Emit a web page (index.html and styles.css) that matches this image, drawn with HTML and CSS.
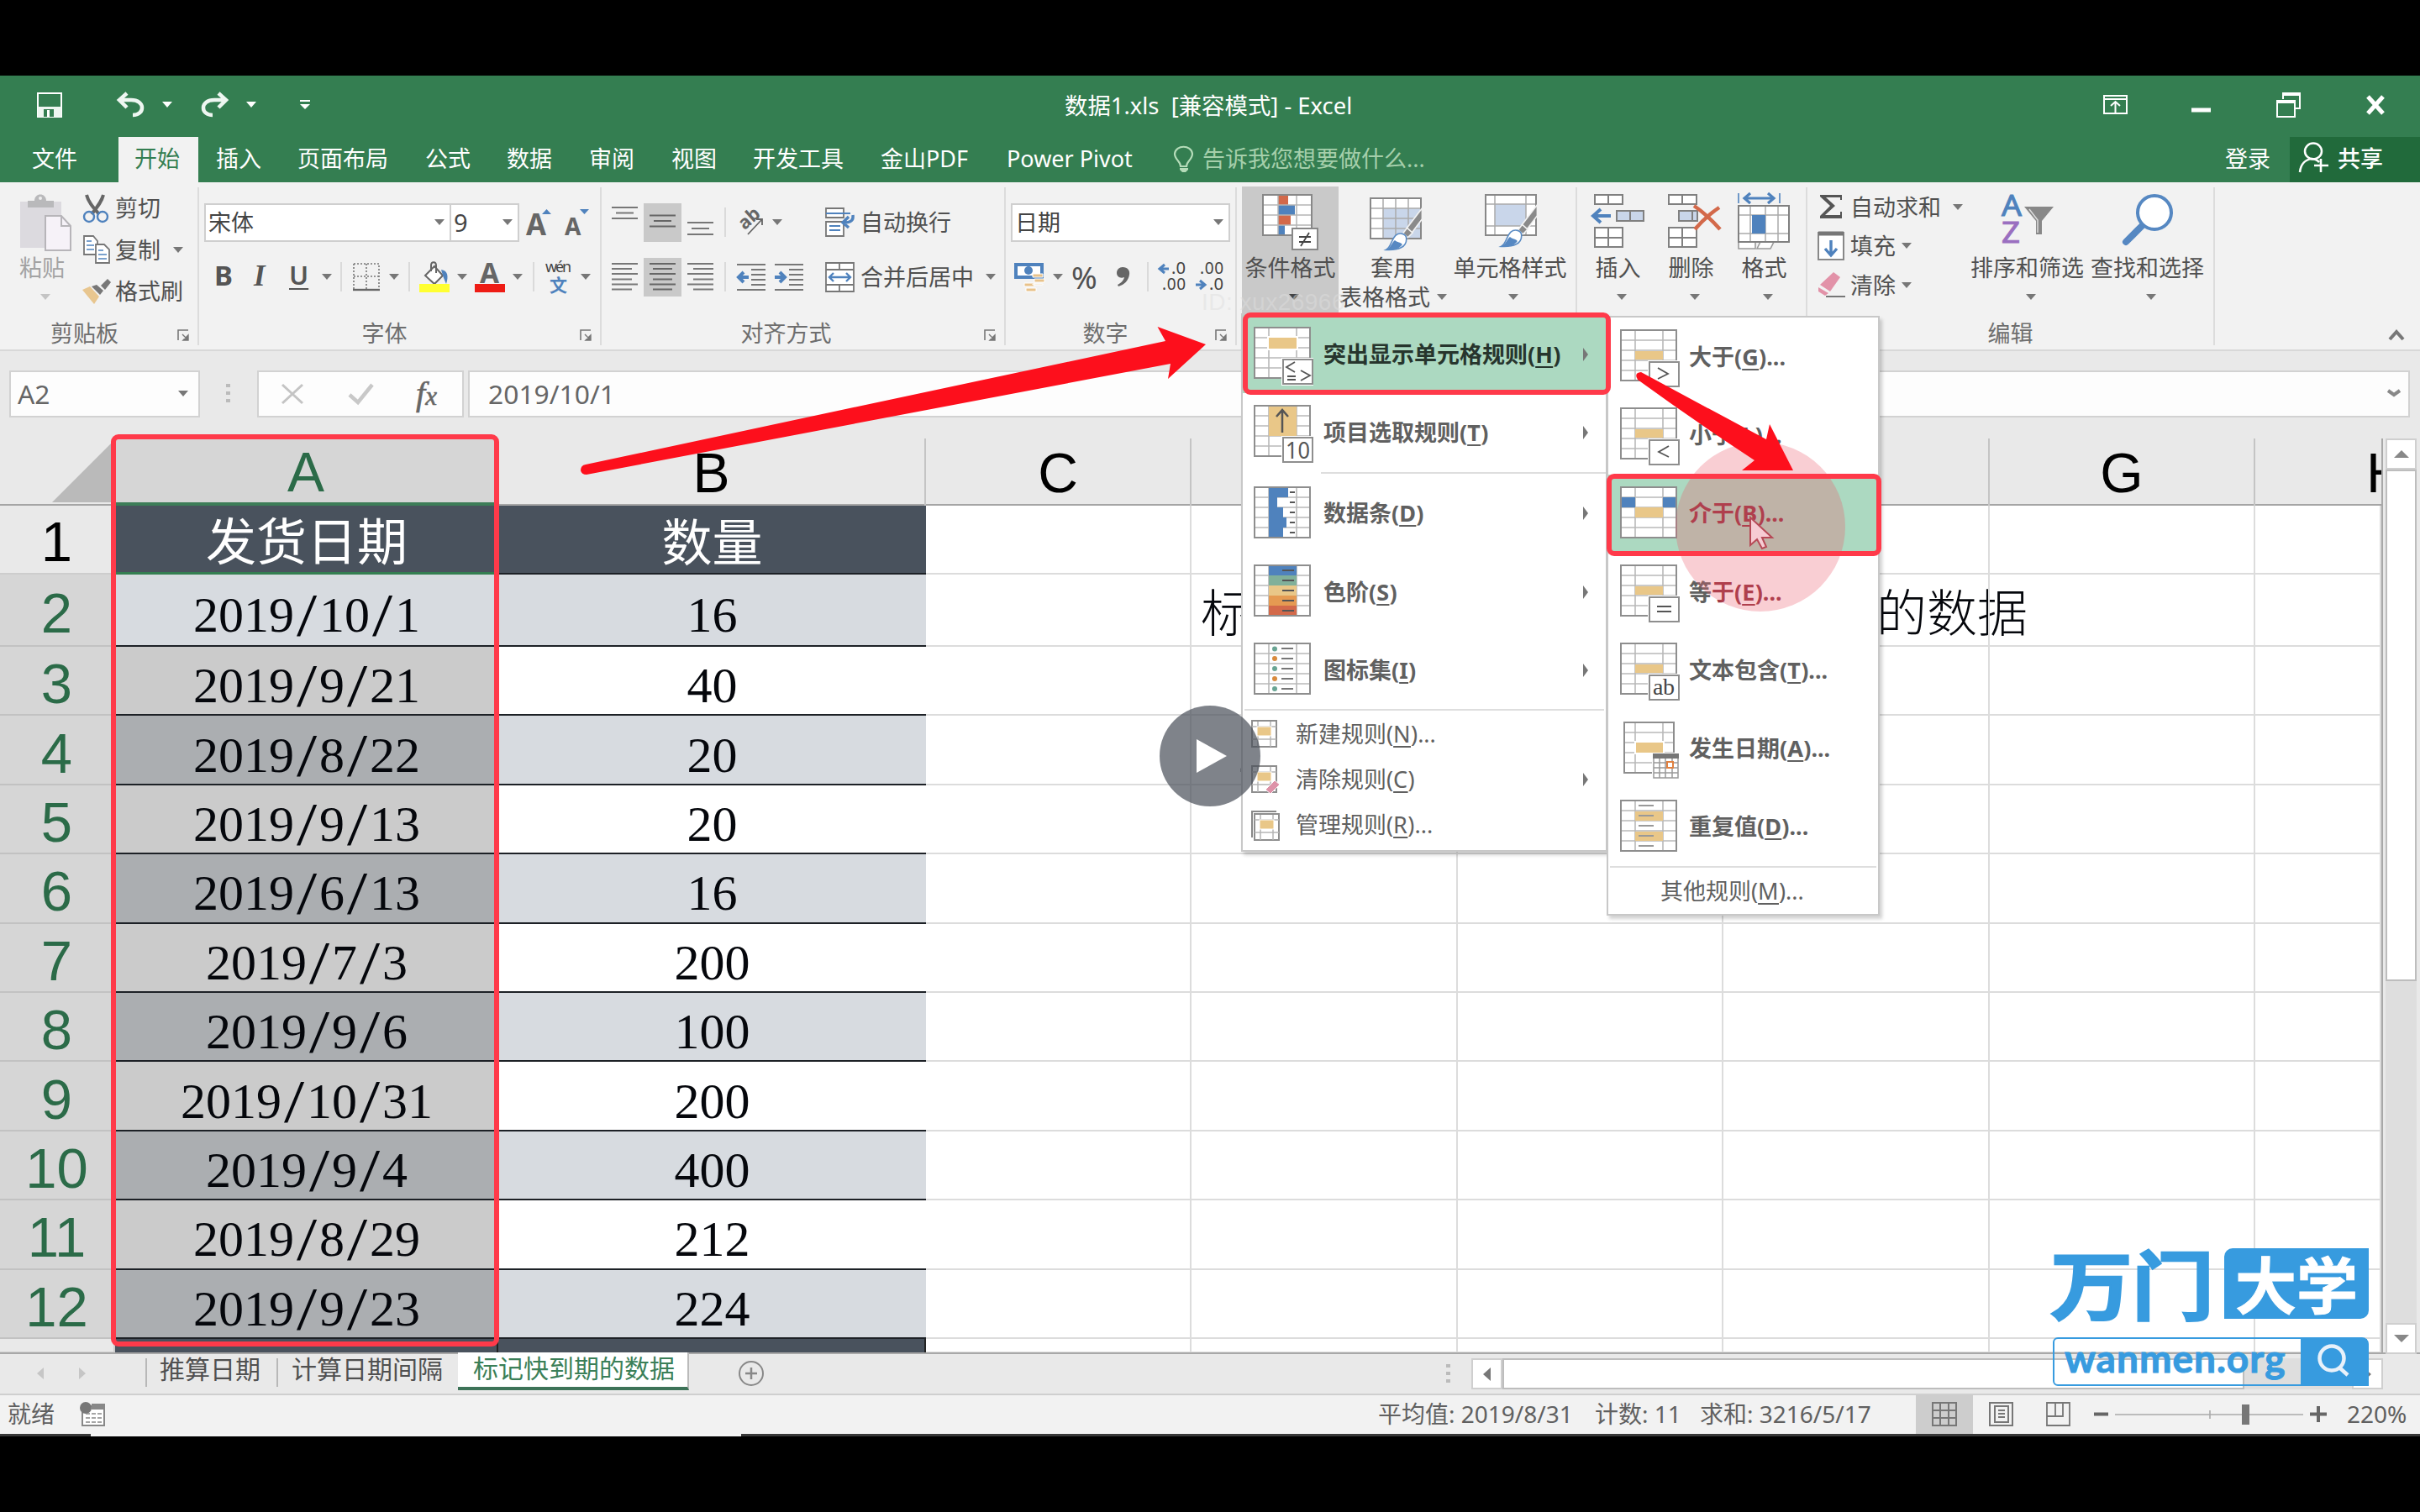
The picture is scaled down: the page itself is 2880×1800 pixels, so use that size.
FILE: index.html
```html
<!DOCTYPE html>
<html lang="zh-CN">
<head>
<meta charset="utf-8">
<title>数据1.xls [兼容模式] - Excel</title>
<link rel="stylesheet" href="styles.css">
</head>
<body>
<svg width="0" height="0" class="defs">
  <defs>
    <symbol id="grid" viewBox="0 0 70 70" overflow="visible">
      <rect x="1" y="1" width="66" height="60" fill="#fff"/>
      <path d="M1 13H67M1 25H67M1 37H67M1 49H67M18 1V61M51 1V61" stroke="#b9b9b9" stroke-width="1.6" fill="none"/>
      <rect x="1" y="1" width="66" height="60" fill="none" stroke="#8e8e8e" stroke-width="2"/>
    </symbol>
    <symbol id="badge" viewBox="0 0 40 34" overflow="visible">
      <rect x="-1" y="-1" width="38" height="33" fill="#fff"/>
      <rect x="1" y="1" width="35" height="29" fill="#fff" stroke="#8e8e8e" stroke-width="2"/>
    </symbol>
    <symbol id="mini" viewBox="0 0 32 34" overflow="visible">
      <rect x="1" y="1" width="29" height="31" fill="#fff" stroke="#8e8e8e" stroke-width="2"/>
      <path d="M8 2V32M23 2V32M1 8H30M1 23H30" stroke="#b5b5b5" stroke-width="1.5"/>
      <rect x="7" y="8" width="17" height="11" fill="#e9c788" stroke="#fff"/>
    </symbol>
    <symbol id="launch" viewBox="0 0 15 15" overflow="visible">
      <path d="M1 13V1H13" fill="none" stroke="#777" stroke-width="1.6"/>
      <path d="M6 6L12 12M13 7V13H7Z" fill="#777" stroke="#777" stroke-width="1.4"/>
    </symbol>
    <symbol id="brush" viewBox="0 0 54 64" overflow="visible">
      <path d="M54 1V17L39 37L31 31Z" fill="#8a8a8a" stroke="#f2f2f2" stroke-width="2"/>
      <path d="M32 30L40 37L33 44L26 38Z" fill="#8a8a8a" stroke="#f2f2f2" stroke-width="2"/>
      <path d="M1 62C9 58 8 48 15 41C21 36 31 38 31 46C31 58 20 63 1 62Z" fill="#fff" stroke="#5b8cc4" stroke-width="2"/>
      <path d="M1 62C9 58 9 52 14 48C19 52 21 50 25 54C20 61 12 63 1 62Z" fill="#5688c2"/>
    </symbol>
  </defs>
</svg>

<div class="screen">
  <header class="titlebar">
    <div class="quick">
      <svg width="30" height="30" viewBox="0 0 30 30"><path d="M1 1H29V29H1Z" fill="none" stroke="#fff" stroke-width="2"/><path d="M1 17H29V29H1Z" fill="#eef6f1"/><path d="M8 29V20H20V29Z" fill="#347e51"/><path d="M12 21H15V29H12Z" fill="#fff"/></svg>
      <svg class="q-undo" width="34" height="30" viewBox="0 0 34 30"><path d="M12 1L3 9L12 18M4 9H17C34 9 34 27 19 27" fill="none" stroke="#eef6f1" stroke-width="4.5"/></svg>
      <i class="dd light"></i>
      <svg class="q-redo" width="34" height="30" viewBox="0 0 34 30"><path d="M22 1L31 9L22 18M30 9H17C0 9 0 27 15 27" fill="none" stroke="#eef6f1" stroke-width="4.5"/></svg>
      <i class="dd light"></i>
      <svg class="q-more" width="12" height="12" viewBox="0 0 12 12"><path d="M0 1H12" stroke="#fff" stroke-width="2"/><path d="M0 5H12L6 11Z" fill="#fff"/></svg>
    </div>
    <div class="doc">数据1.xls&nbsp; [兼容模式] - Excel</div>
    <div class="winctl">
      <svg class="w104" width="30" height="24" viewBox="0 0 30 24"><path d="M1 1H28V22H1ZM1 5H28M14.5 21V9M9 13L14.5 8L20 13" fill="none" stroke="#fff" stroke-width="2"/></svg>
      <svg class="w100" width="24" height="24" viewBox="0 0 24 24"><path d="M0 18H23" stroke="#fff" stroke-width="5"/></svg>
      <svg class="w107" width="30" height="30" viewBox="0 0 30 30"><path d="M8 8V1H28V19H22M1 10H22V29H1Z" fill="none" stroke="#fff" stroke-width="2"/><path d="M8 2H28M1 11H22" stroke="#fff" stroke-width="4"/></svg>
      <svg width="23" height="22" viewBox="0 0 23 22"><path d="M2 1L20 21M20 1L2 21" stroke="#fff" stroke-width="5"/></svg>
    </div>
  </header>

  <nav class="tabs">
    <span class="tab w141 file">文件</span><span class="tab w95 on">开始</span><span class="tab w97">插入</span><span class="tab w152">页面布局</span><span class="tab w97">公式</span><span class="tab w98">数据</span><span class="tab w98">审阅</span><span class="tab w97">视图</span><span class="tab w152">开发工具</span><span class="tab w150">金山PDF</span><span class="tab w194">Power Pivot</span>
    <svg class="bulb" width="24" height="32" viewBox="0 0 24 32"><path d="M8 24C8 18 1 16 1 9C2 -2 21 -2 22 9C22 16 15 18 15 24Z" fill="none" stroke="#b5dcb9" stroke-width="2.2"/><path d="M7 26H17V28L14 31H10L7 28Z" fill="#b5dcb9"/></svg>
    <span class="tell">告诉我您想要做什么...</span>
    <span class="login">登录</span>
    <span class="share"><svg width="36" height="38" viewBox="0 0 36 38"><ellipse cx="17" cy="11" rx="10" ry="9.5" fill="none" stroke="#fff" stroke-width="2.5"/><path d="M1 36C2 26 8 21 15 20C19 20 22 22 24 24M26 20V36M18 28H35" fill="none" stroke="#fff" stroke-width="2.6"/></svg>共享</span>
  </nav>

  <section class="ribbon">
    <div class="group g-clip">
      <div class="body">
        <div class="big dim w98">
          <div class="pic"><svg width="62" height="68" viewBox="0 0 62 68"><path d="M1 9H50V64H1Z" fill="#dcdadf"/><path d="M10 8H18C18 -2 32 -2 32 8H41V16H10Z" fill="#b9b9bb"/><circle cx="25" cy="5" r="2" fill="#eee"/><path d="M31 26H50L61 38V67H31Z" fill="#f6f2f8" stroke="#b7b5b9" stroke-width="2"/><path d="M50 26V38H61" fill="none" stroke="#b7b5b9" stroke-width="2"/></svg></div>
          <div class="cap">粘贴</div><div class="sub"><i class="dd pale"></i></div>
        </div>
        <div class="stack">
          <div class="line"><svg class="w40" width="32" height="34" viewBox="0 0 32 34"><path d="M5 1C7 9 12 15 20 24M25 1C23 9 18 15 11 24" stroke="#666" stroke-width="4" fill="none"/><circle cx="8" cy="27" r="6" fill="none" stroke="#4f82bd" stroke-width="2.4"/><circle cx="24" cy="27" r="6" fill="none" stroke="#4f82bd" stroke-width="2.4"/></svg>剪切</div>
          <div class="line"><svg class="w40" width="34" height="34" viewBox="0 0 34 34"><path d="M2 1H13L18 7V23H2Z" fill="#fff" stroke="#777" stroke-width="1.8"/><path d="M5 7H11M5 12H14M5 17H14" stroke="#4f82bd" stroke-width="1.6"/><path d="M16 11H26L32 17V33H16Z" fill="#fff" stroke="#777" stroke-width="1.8"/><path d="M19 18H25M19 23H29M19 28H29" stroke="#4f82bd" stroke-width="1.6"/></svg><span class="w69">复制</span><i class="dd"></i></div>
          <div class="line"><svg class="w40" width="34" height="32" viewBox="0 0 34 32"><path d="M0 14L9 10L20 22L14 31Z" fill="#e8c68f"/><path d="M11 10L17 8L25 15L21 20Z" fill="#777"/><path d="M22 9L30 1L34 5L27 14Z" fill="#777"/></svg>格式刷</div>
        </div>
      </div>
      <div class="foot"><span class="name n-clip">剪贴板</span><svg class="lnch" width="15" height="15"><use href="#launch"/></svg></div>
    </div>

    <div class="group g-font">
      <div class="body rows">
        <div class="row p6"><span class="select w293">宋体<i class="dd"></i></span><span class="select w81 nb">9<i class="dd"></i></span>
          <svg class="grow" width="82" height="36" viewBox="0 0 82 36"><text x="8" y="33" font-size="35" font-weight="bold" textLength="24" lengthAdjust="spacingAndGlyphs" fill="#666">A</text><path d="M27 8H38L32.500 2Z" fill="#4f82bd"/><text x="54" y="33" font-size="28" font-weight="bold" fill="#666">A</text><path d="M72 2H83L77.500 8Z" fill="#4f82bd"/></svg></div>
        <div class="row p18"><b class="w45 fb">B</b><b class="w44 fi">I</b><b class="w39 fu">U</b><i class="dd w22"></i><i class="bar w15"></i>
          <svg class="w43" width="32" height="34" viewBox="0 0 32 34"><path d="M1 1H31V31M1 1V31M16 1V31M1 16H31" fill="none" stroke="#777" stroke-width="1.6" stroke-dasharray="2 2"/><path d="M0 32H32" stroke="#666" stroke-width="2.4"/></svg><i class="dd w23"></i><i class="bar w13"></i>
          <svg class="w45" width="36" height="38" viewBox="0 0 36 38"><path d="M7 17L18 6L28 17L18 27Z" fill="#fff" stroke="#666" stroke-width="2"/><path d="M14 12V5C14 0 20 0 20 5V14" fill="none" stroke="#666" stroke-width="2"/><path d="M26 10C34 11 35 18 32 27C30 22 29 20 28 17Z" fill="#4f82bd"/><path d="M0 27H36V37H0Z" fill="#ffff32"/></svg><i class="dd w21"></i>
          <svg class="w45" width="36" height="38" viewBox="0 0 36 38"><text x="6" y="26" font-size="34" font-weight="bold" textLength="23" lengthAdjust="spacingAndGlyphs" fill="#666">A</text><path d="M0 27H36V37H0Z" fill="#ee1c15"/></svg><i class="dd w24"></i><i class="bar w15"></i>
          <svg class="w42" width="34" height="38" viewBox="0 0 34 38"><text x="0" y="13" font-size="18" textLength="31" fill="#444">wén</text><text x="5" y="36" font-size="21" fill="#4f82bd" font-weight="bold">文</text></svg><i class="dd"></i></div>
      </div>
      <div class="foot"><span class="name">字体</span><svg class="lnch" width="15" height="15"><use href="#launch"/></svg></div>
    </div>

    <div class="group g-align">
      <div class="body">
        <div class="rows w251">
          <div class="row p8"><span class="w45 al"><svg width="31" height="46" viewBox="0 0 31 46"><path d="M0 5H31M5 11.500H26M0 18H31" stroke="#777" stroke-width="2"/></svg></span><span class="w45 al hot"><svg width="31" height="46" viewBox="0 0 31 46"><path d="M0 14.500H31M5 21H26M0 27.500H31" stroke="#666" stroke-width="2"/></svg></span><span class="w45 al"><svg width="31" height="46" viewBox="0 0 31 46"><path d="M0 23H31M5 30H26M0 37H31" stroke="#777" stroke-width="2"/></svg></span>
            <i class="bar w15 ml4"></i><svg class="w42" width="34" height="32" viewBox="0 0 34 32"><text x="4" y="22" transform="rotate(-42 11 17)" font-size="22" font-weight="bold" fill="#666">ab</text><path d="M13 30L29 13M23 12H30V19" fill="none" stroke="#666" stroke-width="1.8"/></svg><i class="dd"></i></div>
          <div class="row p8"><span class="w45 al"><svg width="31" height="46" viewBox="0 0 31 46"><path d="M0 7H31M0 13H24M0 19H31M0 25.500H24M0 31.500H31M0 37.500H24" stroke="#777" stroke-width="2"/></svg></span><span class="w45 al hot"><svg width="31" height="46" viewBox="0 0 31 46"><path d="M0 7H31M4 13H27M0 19H31M4 25.500H27M0 31.500H31M4 37.500H27" stroke="#666" stroke-width="2"/></svg></span><span class="w45 al"><svg width="31" height="46" viewBox="0 0 31 46"><path d="M0 7H31M7 13H31M0 19H31M7 25.500H31M0 31.500H31M7 37.500H31" stroke="#777" stroke-width="2"/></svg></span>
            <i class="bar w15 ml4"></i><svg class="w45" width="34" height="34" viewBox="0 0 34 34"><path d="M0 2H34M17 8H34M17 14H34M17 20H34M17 26H34M0 32H34" stroke="#777" stroke-width="2"/><path d="M14 17H2M8 11L2 17L8 23" fill="none" stroke="#4f82bd" stroke-width="4"/></svg><svg width="34" height="34" viewBox="0 0 34 34"><path d="M0 2H34M17 8H34M17 14H34M17 20H34M17 26H34M0 32H34" stroke="#777" stroke-width="2"/><path d="M0 17H12M6 11L12 17L6 23" fill="none" stroke="#4f82bd" stroke-width="4"/></svg></div>
        </div>
        <div class="rows wraps">
          <div class="row"><svg class="w42" width="36" height="36" viewBox="0 0 36 36"><path d="M1 1H22V12H1ZM1 17H22V34H1Z" fill="#fff" stroke="#777" stroke-width="1.8"/><path d="M1 7H30M5 22H18M5 27H18" stroke="#4f82bd" stroke-width="1.8"/><path d="M33 9C34 15 31 18 22 18M28 11L21 18L28 24" fill="none" stroke="#4f82bd" stroke-width="3.4"/></svg>自动换行</div>
          <div class="row"><svg class="w42" width="36" height="36" viewBox="0 0 36 36"><path d="M1 1H34V35H1ZM1 9H34M1 27H34M17 1V9M17 27V35" fill="#fff" stroke="#777" stroke-width="1.8"/><path d="M5 18H30M10 13L5 18L10 23M25 13L30 18L25 23" fill="none" stroke="#4f82bd" stroke-width="2.4"/></svg><span class="w149">合并后居中</span><i class="dd"></i></div>
        </div>
      </div>
      <div class="foot"><span class="name n-align">对齐方式</span><svg class="lnch" width="15" height="15"><use href="#launch"/></svg></div>
    </div>

    <div class="group g-num">
      <div class="body rows">
        <div class="row p6"><span class="select w261">日期<i class="dd"></i></span></div>
        <div class="row p10"><svg class="w46" width="36" height="34" viewBox="0 0 36 34"><path d="M2 2H33V17H2Z" fill="#fff" stroke="#4f82bd" stroke-width="4"/><circle cx="17" cy="9" r="5" fill="#4f82bd"/><path d="M22 13h12v4h-12zM24 19h12v4h-12zM22 25h12v1h-12zM12 24h12v4h-12zM14 30h12v4h-12z" fill="#e8c28a" stroke="#fff" stroke-width="1"/></svg><i class="dd w22"></i><span class="w55 pct">%</span><span class="w36"><svg width="16" height="24" viewBox="0 0 16 24"><path d="M7 0C13 0 16 4 15 9C14 16 9 21 2 23L1 21C6 18 8 16 9 12C4 14 0 11 0 7C0 3 3 0 7 0Z" fill="#666"/></svg></span><i class="bar w13"></i>
          <svg class="w45" width="34" height="38" viewBox="0 0 34 38"><path d="M13 9H2M8 4L2 9L8 14" fill="none" stroke="#4f82bd" stroke-width="3"/><text x="16" y="15" font-size="19" fill="#444" textLength="17" lengthAdjust="spacingAndGlyphs">.0</text><text x="5" y="34" font-size="19" fill="#444" textLength="28">.00</text></svg><svg width="34" height="38" viewBox="0 0 34 38"><text x="5" y="15" font-size="19" fill="#444" textLength="28">.00</text><path d="M0 28H11M5 23L11 28L5 33" fill="none" stroke="#4f82bd" stroke-width="3"/><text x="16" y="34" font-size="19" fill="#444" textLength="17" lengthAdjust="spacingAndGlyphs">.0</text></svg></div>
      </div>
      <div class="foot"><span class="name n-num">数字</span><svg class="lnch l-num" width="15" height="15"><use href="#launch"/></svg></div>
    </div>

    <div class="group g-style">
      <div class="body p6">
        <div class="big w115 pressed"><div class="pic"><svg width="67" height="67" viewBox="0 0 67 67"><path d="M1 1H59V49H1Z" fill="#fff"/><path d="M19 1H31V13H19ZM19 25H34V37H19Z" fill="#d3694a"/><path d="M19 13H39V25H19ZM19 37H27V49H19Z" fill="#4f82bd"/><path d="M1 13H59M1 25H59M1 37H59M19 1V49M41 1V49" stroke="#b5b5b5" stroke-width="1.5"/><path d="M1 1H59V49H1Z" fill="none" stroke="#888" stroke-width="2"/><path d="M36 41H66V66H36Z" fill="#fff" stroke="#888" stroke-width="2"/><path d="M44 51H58M44 57H58M56 46L46 62" stroke="#444" stroke-width="1.8"/></svg></div><div class="cap">条件格式</div><div class="sub"><i class="dd dark r4"></i></div></div>
        <div class="big w130"><div class="pic"><svg class="r12" width="67" height="70" viewBox="0 0 67 70"><path d="M1 5H61V53H1Z" fill="#fff"/><path d="M16 17H61V53H16Z" fill="#c9d6ea"/><path d="M1 17H61M1 29H61M1 41H61M16 5V53M31 5V53M46 5V53" stroke="#aaa" stroke-width="1.5"/><path d="M1 5H61V53H1Z" fill="none" stroke="#888" stroke-width="2"/><use href="#brush" x="15" y="16" width="51" height="52"/></svg></div><div class="cap">套用</div><div class="sub">表格格式<i class="dd"></i></div></div>
        <div class="big w148"><div class="pic"><svg class="r6" width="67" height="67" viewBox="0 0 67 67"><path d="M1 1H61V49H1Z" fill="#fff"/><path d="M12 12H49V38H12Z" fill="#c9d6ea"/><path d="M1 12H61M1 38H61M12 1V49M49 1V49" stroke="#aaa" stroke-width="1.5"/><path d="M1 1H61V49H1Z" fill="none" stroke="#888" stroke-width="2"/><use href="#brush" x="15" y="12" width="51" height="52"/></svg></div><div class="cap">单元格样式</div><div class="sub"><i class="dd r4"></i></div></div>
      </div>
    </div>

    <div class="group g-cell">
      <div class="body p5">
        <div class="big w87"><div class="pic"><svg width="65" height="66" viewBox="0 0 65 66"><path d="M5 1H38V12H5ZM21 1V12M5 40H38V63H5ZM5 52H38M21 40V63" fill="#fff" stroke="#808080" stroke-width="2"/><path d="M31 20H63V32H31ZM47 20V32" fill="#c9d6ea" stroke="#808080" stroke-width="2"/><path d="M24 26H3M12 18L3 26L12 34" fill="none" stroke="#4f82bd" stroke-width="4"/></svg></div><div class="cap">插入</div><div class="sub"><i class="dd r4"></i></div></div>
        <div class="big w87"><div class="pic"><svg class="r6" width="65" height="66" viewBox="0 0 65 66"><path d="M2 1H35V12H2ZM18 1V12M2 40H35V63H2ZM2 52H35M18 40V63" fill="#fff" stroke="#808080" stroke-width="2"/><path d="M14 20H36V32H14ZM30 20V32" fill="#c9d6ea" stroke="#808080" stroke-width="2"/><path d="M32 14C44 22 54 32 63 42M62 16C50 24 40 34 33 42" fill="none" stroke="#d3694a" stroke-width="4.5"/></svg></div><div class="cap">删除</div><div class="sub"><i class="dd r4"></i></div></div>
        <div class="big w87"><div class="pic"><svg width="65" height="68" viewBox="0 0 65 68"><path d="M2 57H22V65H2ZM24 65L28 57H44L40 65Z" fill="#fff" stroke="#999" stroke-width="1.600"/><path d="M2 14H62V57H2Z" fill="#fff"/><path d="M2 25H62M2 47H62M16 14V57M34 14V57M49 14V57" stroke="#aaa" stroke-width="1.500"/><path d="M18 25H34V47H18Z" fill="#4f82bd"/><path d="M2 14H62V57H2Z" fill="none" stroke="#808080" stroke-width="2"/><path d="M2 -1V11M51 -1V11" stroke="#4f82bd" stroke-width="1.600"/><path d="M9 5H44M16 -1L9 5L16 11M37 -1L44 5L37 11" fill="none" stroke="#4f82bd" stroke-width="3.200"/></svg></div><div class="cap">格式</div><div class="sub"><i class="dd r4"></i></div></div>
      </div>
    </div>

    <div class="group g-edit">
      <div class="body p12">
        <div class="stack tight w178">
          <div class="line"><svg class="w40" width="30" height="30" viewBox="0 0 30 30"><path d="M2 1H28V7H26V4H9L20 14L8 25H26V21H28V29H2V26L14 14L2 3Z" fill="#555"/></svg><span class="w122">自动求和</span><i class="dd"></i></div>
          <div class="line"><svg class="w40" width="32" height="36" viewBox="0 0 32 36"><path d="M1 2H31V34H1Z" fill="#fff" stroke="#888" stroke-width="2"/><path d="M1 3H31" stroke="#777" stroke-width="5"/><path d="M16 11V29M9 21L16 29L23 21" fill="none" stroke="#4f82bd" stroke-width="3.400"/></svg><span class="w61">填充</span><i class="dd"></i></div>
          <div class="line"><svg class="w40" width="34" height="32" viewBox="0 0 34 32"><path d="M19 1L27 7L15 24L3 16Z" fill="#e292a8"/><path d="M1 19L13 26L9 29L1 24Z" fill="#e292a8"/><path d="M10 30H33" stroke="#777" stroke-width="2"/></svg><span class="w61">清除</span><i class="dd"></i></div>
        </div>
        <div class="big w143"><div class="pic"><svg width="64" height="62" viewBox="0 0 64 62"><text x="1" y="26" font-size="35" textLength="24" lengthAdjust="spacingAndGlyphs" fill="#4f82bd" stroke="#4f82bd">A</text><text x="1" y="58" font-size="35" textLength="22" lengthAdjust="spacingAndGlyphs" fill="#9a6fc0" stroke="#9a6fc0">Z</text><path d="M28 15H63L49 32V48H42V32Z" fill="#888"/><path d="M34 18L44 31V46" fill="none" stroke="#ddd" stroke-width="1.500"/></svg></div><div class="cap">排序和筛选</div><div class="sub"><i class="dd r4"></i></div></div>
        <div class="big w143"><div class="pic"><svg width="60" height="62" viewBox="0 0 60 62"><path d="M4 57L24 37" stroke="#5688c2" stroke-width="8" stroke-linecap="round"/><circle cx="38" cy="22" r="20" fill="#fff" stroke="#5688c2" stroke-width="4"/></svg></div><div class="cap">查找和选择</div><div class="sub"><i class="dd r4"></i></div></div>
      </div>
      <div class="foot"><span class="name">编辑</span></div>
    </div>
    <svg class="fold" width="20" height="14" viewBox="0 0 20 14"><path d="M2 12L10 3L18 12" fill="none" stroke="#777" stroke-width="4"/></svg>
  </section>

  <section class="formula">
    <div class="box namebox">A2<i class="dd"></i></div>
    <svg class="dots" width="5" height="24" viewBox="0 0 5 24"><path d="M0 0h5v4H0zM0 9h5v4H0zM0 18h5v4H0z" fill="#bbb"/></svg>
    <div class="box tools">
      <svg class="w81" width="26" height="24" viewBox="0 0 26 24"><path d="M1 1L25 23M25 1L1 23" stroke="#c4c4c4" stroke-width="3"/></svg>
      <svg class="w80" width="30" height="26" viewBox="0 0 30 26"><path d="M1 14L11 23L28 2" fill="none" stroke="#c8c8c8" stroke-width="4.500"/></svg>
      <em>f<small>x</small></em>
    </div>
    <div class="box input">2019/10/1<svg width="18" height="11" viewBox="0 0 18 11"><path d="M2 2L9 7L16 2" fill="none" stroke="#888" stroke-width="4"/></svg></div>
  </section>

  <main class="sheet">
    <div class="cells">
      <div class="r heads"><span class="corner"><svg width="70" height="70" viewBox="0 0 70 70"><path d="M70 0V70H0Z" fill="#bababa"/></svg></span><span class="sel">A</span><span>B</span><span>C</span><span>D</span><span>E</span><span>F</span><span>G</span><span class="last">H</span></div>
      <div class="r first"><b>1</b><u>发货日期</u><u>数量</u><s></s><s></s><s></s><s></s><s></s><s></s></div>
      <div class="r second on"><b>2</b><u>2019<i>/</i>10<i>/</i>1</u><u>16</u><s></s><s class="over"><em>标</em><em class="tail">的数据</em></s><s></s><s></s><s></s><s></s></div>
      <div class="r on odd"><b>3</b><u>2019<i>/</i>9<i>/</i>21</u><u>40</u><s></s><s></s><s></s><s></s><s></s><s></s></div>
      <div class="r on even"><b>4</b><u>2019<i>/</i>8<i>/</i>22</u><u>20</u><s></s><s class="over two">2</s><s></s><s></s><s></s><s></s></div>
      <div class="r on odd"><b>5</b><u>2019<i>/</i>9<i>/</i>13</u><u>20</u><s></s><s></s><s></s><s></s><s></s><s></s></div>
      <div class="r on even"><b>6</b><u>2019<i>/</i>6<i>/</i>13</u><u>16</u><s></s><s></s><s></s><s></s><s></s><s></s></div>
      <div class="r on odd"><b>7</b><u>2019<i>/</i>7<i>/</i>3</u><u>200</u><s></s><s></s><s></s><s></s><s></s><s></s></div>
      <div class="r on even"><b>8</b><u>2019<i>/</i>9<i>/</i>6</u><u>100</u><s></s><s></s><s></s><s></s><s></s><s></s></div>
      <div class="r on odd"><b>9</b><u>2019<i>/</i>10<i>/</i>31</u><u>200</u><s></s><s></s><s></s><s></s><s></s><s></s></div>
      <div class="r on even"><b>10</b><u>2019<i>/</i>9<i>/</i>4</u><u>400</u><s></s><s></s><s></s><s></s><s></s><s></s></div>
      <div class="r on odd"><b>11</b><u>2019<i>/</i>8<i>/</i>29</u><u>212</u><s></s><s></s><s></s><s></s><s></s><s></s></div>
      <div class="r on even"><b>12</b><u>2019<i>/</i>9<i>/</i>23</u><u>224</u><s></s><s></s><s></s><s></s><s></s><s></s></div>
      <div class="r stub"><b></b><u></u><u></u><s></s><s></s><s></s><s></s><s></s><s></s></div>
    </div>
    <div class="vscroll">
      <div class="btn"><svg width="18" height="9" viewBox="0 0 18 9"><path d="M0 9L9 0L18 9Z" fill="#888"/></svg></div>
      <div class="thumb"></div><div class="track"></div>
      <div class="btn low"><svg width="18" height="9" viewBox="0 0 18 9"><path d="M0 0L9 9L18 0Z" fill="#888"/></svg></div>
    </div>
  </main>

  <section class="sheettabs">
    <svg class="nav" width="60" height="14" viewBox="0 0 60 14"><path d="M8 0V14L0 7ZM50 0V14L58 7Z" fill="#c6c6c6"/></svg>
    <span class="st w156">推算日期</span><span class="st w216">计算日期间隔</span><span class="st act">标记快到期的数据</span>
    <svg class="plus" width="32" height="30" viewBox="0 0 32 30"><circle cx="16" cy="15" r="14" fill="none" stroke="#888" stroke-width="2"/><path d="M16 8V22M9 15H23" stroke="#888" stroke-width="2.500"/></svg>
    <svg class="dots" width="5" height="24" viewBox="0 0 5 24"><path d="M0 0h5v4H0zM0 9h5v4H0zM0 18h5v4H0z" fill="#bbb"/></svg>
    <div class="hscroll"><div class="btn"><svg width="9" height="16" viewBox="0 0 9 16"><path d="M9 0V16L0 8Z" fill="#777"/></svg></div><div class="hthumb"></div><div class="track"></div><div class="btn"><svg width="9" height="16" viewBox="0 0 9 16"><path d="M0 0V16L9 8Z" fill="#777"/></svg></div></div>
  </section>

  <footer class="status">
    <span class="w86">就绪</span>
    <svg width="30" height="30" viewBox="0 0 30 30"><path d="M3 8V28H29V5H12" fill="#fff" stroke="#888" stroke-width="2"/><path d="M14 2H30V9H14Z" fill="#888"/><circle cx="7" cy="7" r="7" fill="#777"/><path d="M7 14H26M7 19H26M7 24H26" stroke="#888" stroke-width="1.600" stroke-dasharray="5 2"/></svg>
    <span class="sum s1">平均值: 2019/8/31</span><span class="sum s2">计数: 11</span><span class="sum s3">求和: 3216/5/17</span>
    <div class="view lit"><svg width="30" height="30" viewBox="0 0 30 30"><path d="M1 1H29V28H1ZM1 10H29M1 19H29M10 1V28M20 1V28" fill="none" stroke="#777" stroke-width="2"/></svg></div>
    <div class="view"><svg width="30" height="30" viewBox="0 0 30 30"><path d="M1 1H28V28H1ZM7 5H23V24H7ZM11 10H19M11 14H19M11 18H19" fill="none" stroke="#777" stroke-width="2"/></svg></div>
    <div class="view"><svg width="30" height="30" viewBox="0 0 30 30"><path d="M1 1H28V28H1ZM11 1V17M20 1V17H1" fill="none" stroke="#777" stroke-width="1.800"/></svg></div>
    <svg class="zoom" width="280" height="30" viewBox="0 0 280 30"><path d="M1 14.500H18M258 14.500H278M268 5V24" stroke="#666" stroke-width="4"/><path d="M26 15H250M139 10V20" stroke="#aaa" stroke-width="1.600"/><path d="M177 3H186V27H177Z" fill="#777"/></svg>
    <span>220%</span>
  </footer>
  <div class="edge"><i></i></div>

  <div class="wm">ID: xux26966</div>

  <div class="menu main">
    <div class="mi hl"><svg width="72" height="70" viewBox="0 0 72 70"><use href="#grid" width="70" height="70"/><path d="M17 12H52V27H17Z" fill="#e9c788" stroke="#fff" stroke-width="2"/><use href="#badge" x="34" y="38" width="40" height="34"/><path d="M49 42L39 48L49 54M40 59H50M40 63H50M56 52L67 58L56 64" fill="none" stroke="#555" stroke-width="1.800"/></svg><span>突出显示单元格规则(<u>H</u>)</span><i class="go"></i></div>
    <div class="mi"><svg width="72" height="70" viewBox="0 0 72 70"><use href="#grid" width="70" height="70"/><path d="M18 2H51V37H18Z" fill="#e9c788"/><path d="M34 33V7M27 14L34 6L41 14" fill="none" stroke="#555" stroke-width="2.500"/><use href="#badge" x="34" y="38" width="40" height="34"/><text x="38" y="64" font-size="28" textLength="29" lengthAdjust="spacingAndGlyphs" fill="#555">10</text></svg><span>项目选取规则(<u>T</u>)</span><i class="go"></i></div>
    <hr class="in">
    <div class="mi"><svg width="72" height="70" viewBox="0 0 72 70"><use href="#grid" width="70" height="70"/><path d="M18 2H41V13H18ZM18 13H28V25H18ZM18 25H35V37H18ZM18 37H39V49H18ZM18 49H35V60H18Z" fill="#4f82bd"/><path d="M43 7H49M43 19H49M43 31H49M43 43H49M43 55H49" stroke="#555" stroke-width="1.800"/></svg><span>数据条(<u>D</u>)</span><i class="go"></i></div>
    <div class="mi"><svg width="72" height="70" viewBox="0 0 72 70"><use href="#grid" width="70" height="70"/><path d="M18 2H51V13H18Z" fill="#4f82bd"/><path d="M18 13H51V25H18Z" fill="#80b09a"/><path d="M18 25H51V37H18Z" fill="#e9c788"/><path d="M18 37H51V49H18Z" fill="#e59a52"/><path d="M18 49H51V60H18Z" fill="#d3694a"/><path d="M34 7H48M34 19H48M34 31H48M34 43H48M34 55H48" stroke="#555" stroke-width="1.800"/></svg><span>色阶(<u>S</u>)</span><i class="go"></i></div>
    <div class="mi"><svg width="72" height="70" viewBox="0 0 72 70"><use href="#grid" width="70" height="70"/><g fill="#6aa594"><circle cx="25" cy="7.500" r="3"/><circle cx="25" cy="31" r="3"/><circle cx="25" cy="55" r="3"/></g><g fill="#d98b3e"><circle cx="25" cy="19" r="3"/><circle cx="25" cy="43" r="3"/></g><path d="M33 7H47M33 19H47M33 31H47M33 43H47M33 55H47" stroke="#777" stroke-width="1.800"/></svg><span>图标集(<u>I</u>)</span><i class="go"></i></div>
    <hr>
    <div class="mi sm"><svg width="32" height="34"><use href="#mini" width="32" height="34"/></svg><span>新建规则(<u>N</u>)...</span></div>
    <div class="mi sm"><svg width="32" height="34"><use href="#mini" width="32" height="34"/><path d="M28 18L34 23L23 34L17 29Z" fill="#dd92a8" stroke="#fff"/></svg><span>清除规则(<u>C</u>)</span><i class="go"></i></div>
    <div class="mi sm"><svg width="32" height="34"><path d="M1 32V1H30" fill="none" stroke="#888" stroke-width="2"/><use href="#mini" x="3" y="3" width="32" height="34"/></svg><span>管理规则(<u>R</u>)...</span></div>
  </div>

  <div class="menu side">
    <div class="mi"><svg width="72" height="70" viewBox="0 0 72 70"><use href="#grid" width="70" height="70"/><path d="M18 26H51V36H18Z" fill="#e9c788"/><use href="#badge" x="34" y="38" width="40" height="34"/><path d="M45 46L57 53L45 59" fill="none" stroke="#555" stroke-width="1.800"/></svg><span>大于(<u>G</u>)...</span></div>
    <div class="mi"><svg width="72" height="70" viewBox="0 0 72 70"><use href="#grid" width="70" height="70"/><path d="M18 26H51V36H18Z" fill="#e9c788"/><use href="#badge" x="34" y="38" width="40" height="34"/><path d="M58 46L46 53L58 59" fill="none" stroke="#555" stroke-width="1.800"/></svg><span>小于(<u>L</u>)...</span></div>
    <div class="mi hl2"><svg width="72" height="70" viewBox="0 0 72 70"><use href="#grid" width="70" height="70"/><path d="M2 13H18V25H2ZM51 13H66V25H51Z" fill="#4f82bd"/><path d="M18 25H51V37H18Z" fill="#e9c788"/></svg><span class="rosy">介于(<u>B</u>)...</span></div>
    <div class="mi"><svg width="72" height="70" viewBox="0 0 72 70"><use href="#grid" width="70" height="70"/><path d="M18 26H51V36H18Z" fill="#e9c788"/><use href="#badge" x="34" y="38" width="40" height="34"/><path d="M44 50H61M44 56H61" stroke="#555" stroke-width="1.800"/></svg><span>等<em class="rosy">于(<u>E</u>)...</em></span></div>
    <div class="mi"><svg width="72" height="70" viewBox="0 0 72 70"><use href="#grid" width="70" height="70"/><path d="M18 26H51V36H18Z" fill="#e9c788"/><use href="#badge" x="34" y="38" width="40" height="34"/><text class="serif" x="39" y="62" font-size="28" fill="#444" textLength="26">ab</text></svg><span>文本包含(<u>T</u>)...</span></div>
    <div class="mi"><svg width="72" height="70" viewBox="0 0 72 70"><rect x="5" y="1" width="59" height="60" fill="#fff"/><path d="M5 13H64M5 25H64M5 37H64M5 49H64M18 1V61M51 1V61" stroke="#b9b9b9" stroke-width="1.600"/><rect x="5" y="1" width="59" height="60" fill="none" stroke="#8e8e8e" stroke-width="2"/><path d="M18 24H52V38H18Z" fill="#e9c788" stroke="#fff" stroke-width="2"/><path d="M38 37H71V69H38Z" fill="#fff"/><path d="M40 43H69V67H40ZM40 49H69M40 55H69M40 61H69M47 43V67M54 43V67M62 43V67" fill="#fff" stroke="#999" stroke-width="1.500"/><path d="M39 38H70V44H39Z" fill="#777"/><path d="M56 48H63V55H56Z" fill="#fff" stroke="#e08040" stroke-width="2"/></svg><span>发生日期(<u>A</u>)...</span></div>
    <div class="mi"><svg width="72" height="70" viewBox="0 0 72 70"><use href="#grid" width="70" height="70"/><path d="M18 14H51V25H18ZM18 38H51V49H18Z" fill="#e9c788"/><path d="M22 7H40M22 19H40M22 31H40M22 43H40M22 55H40" stroke="#999" stroke-width="1.800"/></svg><span>重复值(<u>D</u>)...</span></div>
    <hr>
    <div class="mi other"><span>其他规则(<u>M</u>)...</span></div>
  </div>

  <div class="halo"></div>
  <svg class="cursor" width="30" height="42" viewBox="0 0 30 42"><path d="M2 2V35L10 28L16 39L21 37L16 26H28Z" fill="#f6ccd3" stroke="#b64956" stroke-width="2"/></svg>
  <div class="mark m-col"></div><div class="mark m-rule"></div><div class="mark m-between"></div>
  <svg class="arrows" width="1460" height="200" viewBox="685 380 1460 200"><path d="M697 553L1387 406L1377.500 389L1435 410L1390 451L1393 433L698 565Q692 565 691 560Q691 554 697 553Z" fill="#fd0f1c"/><path d="M1953 443Q2025 482 2102 523L2106 505L2134 560H2073L2088 548Q2015 500 1949 452Q1944 444 1953 443Z" fill="#fd0f1c"/></svg>

  <div class="logo">
    <div class="l1"><span class="wm1">万门</span><span class="wm2">大学</span></div>
    <div class="l2"><span>wanmen.org</span><b><svg width="40" height="42" viewBox="0 0 40 42"><circle cx="17" cy="17" r="14.500" fill="none" stroke="#e8f1fa" stroke-width="4.500"/><path d="M26 28L36 37" stroke="#e8f1fa" stroke-width="4.500"/></svg></b></div>
  </div>
  <div class="play"><svg width="38" height="40" viewBox="0 0 38 40"><path d="M0 0L36 20L0 40Z" fill="#fff"/></svg></div>
</div>
</body>
</html>
```
FILE: styles.css
```css
* { box-sizing: border-box; }
html, body { margin: 0; background: #000; }
body { font: 27px/1 "Noto Sans", "Noto Sans CJK SC", sans-serif; color: #505050; width: 2880px; height: 1800px; overflow: hidden; }
svg { display: block; flex: none; overflow: visible; }
svg text { font-family: "Noto Sans", "Noto Sans CJK SC", sans-serif; }
svg text.serif { font-family: "Liberation Serif", serif; }
i, em { font-style: normal; }
.defs { position: absolute; }
.screen { position: relative; width: 2880px; height: 1800px; padding-top: 90px; background: #000; white-space: nowrap; overflow: hidden; }

/* widths of the ribbon cells */
.w13 { width: 13px; } .w15 { width: 15px; } .w21 { width: 21px; } .w22 { width: 22px; } .w23 { width: 23px; } .w24 { width: 24px; }
.w36 { width: 36px; } .w39 { width: 39px; } .w44 { width: 44px; } .w45 { width: 45px; } .w55 { width: 54px; }
.w61 { width: 61px; } .w69 { width: 69px; } .w81 { width: 81px; } .w86 { width: 86px; } .w87 { width: 87px; } .w95 { width: 95px; } .w97 { width: 97px; } .w98 { width: 98px; }
.w115 { width: 115px; } .w122 { width: 122px; } .w130 { width: 130px; } .w141 { width: 141px; } .w143 { width: 143px; } .w148 { width: 148px; } .w149 { width: 149px; } .w150 { width: 150px; } .w152 { width: 152px; } .w156 { width: 156px; } .w178 { width: 178px; } .w194 { width: 194px; }
.w216 { width: 216px; } .w251 { width: 251px; } .w261 { width: 261px; } .w293 { width: 294px; }
svg.w40 { margin-right: 7px; } svg[width="30"].w40 { margin-right: 8px; margin-left: 1px; } svg[width="32"].w40 { margin-right: 7px; } svg[width="34"].w40 { margin-right: 5px; }
svg.w42 { margin-right: 6px; } svg[width="34"].w42 { margin-right: 8px; }
svg.w43 { width: 32px; margin-right: 11px; }
svg[width="36"].w45 { width: 36px; margin-right: 9px; } svg[width="34"].w45 { width: 34px; margin-right: 11px; }
svg.w46 { margin-right: 10px; }
svg.w80 { margin-right: 50px; } svg.w81 { width: 26px; margin-right: 54px; }
svg.w104 { margin-right: 75px; } svg.w100 { margin-right: 77px; } svg.w107 { margin-right: 77px; }
.p5 { padding-left: 5px; } .p6 { padding-left: 6px; } .p8 { padding-left: 5px; } .p10 { padding-left: 10px; } .p12 { padding-left: 12px; } .p18 { padding-left: 18px; }
.ml4 { margin-left: 6px; }
.r4 { margin-left: 8px; } .r6 { margin-left: 7px; } .r12 { margin-left: 10px; }

.dd { flex: none; height: 7px; }
.dd::before { content: ""; display: block; width: 0; border: solid transparent; border-width: 7px 6px 0; border-top-color: #777; }
.dd.light::before { border-top-color: #fff; } .dd.pale::before { border-top-color: #c4c4c4; } .dd.dark::before { border-top-color: #444; }
.bar { flex: none; height: 35px; border-left: 2px solid #dadada; }

.titlebar { height: 73px; background: #347e51; display: flex; justify-content: space-between; align-items: center; color: #fff; }
.quick { display: flex; align-items: center; width: 1267px; padding: 0 0 4px 44px; }
.q-undo { margin: 0 20px 0 65px; } .q-redo { margin: 0 21px 0 33px; } .q-more { margin-left: 52px; }
.doc { flex: 1; font-size: 27.400px; padding-bottom: 1px; }
.winctl { display: flex; align-items: center; padding-right: 41px; padding-bottom: 3px; }

.tabs { height: 54px; background: #347e51; color: #fff; display: flex; align-items: stretch; }
.tab { display: flex; align-items: center; padding-left: 21px; padding-bottom: 4px; flex: none; }
.tab.file { padding-left: 38px; }
.tab.on { background: #f2f2f2; color: #347e51; padding-left: 19px; }
.bulb { margin: 11px 10px 0 26px; }
.tell { color: #a5cfab; padding-top: 12px; flex: 1; }
.login { padding: 12px 23px 0 0; }
.share { width: 155px; background: #216a3b; display: flex; align-items: center; gap: 10px; padding: 0 0 4px 11px; font-weight: 500; }

.ribbon { height: 201px; background: #f2f2f2; border-bottom: 2px solid #d8d8d8; display: flex; padding-top: 6px; position: relative; }
.group { height: 188px; border-right: 2px solid #dcdcdc; display: flex; flex-direction: column; flex: none; }
.g-clip { width: 237px; } .g-font { width: 479px; } .g-align { width: 481px; } .g-num { width: 275px; } .g-style { width: 405px; } .g-cell { width: 274px; } .g-edit { width: 485px; }
.body { height: 157px; display: flex; flex: none; }
.body.rows { flex-direction: column; }
.rows { display: flex; flex-direction: column; padding-top: 9px; }
.row { height: 65px; display: flex; align-items: center; flex: none; }
.row > * { flex: none; }
.foot { height: 31px; display: flex; align-items: center; justify-content: center; color: #6e6e6e; padding-top: 2px; }
.name { flex: 1; text-align: center; margin-left: 2px; }
.g-font .name { margin-right: -15px; padding-right: 29px; }
.g-align .name { margin-right: -15px; padding-right: 33px; }
.g-clip .name { margin-right: -15px; padding-right: 27px; }
.g-num .name { margin-right: -15px; padding-right: 29px; }
.g-edit .name { padding-right: 2px; }
.lnch { margin-right: 9px; margin-top: 6px; }
.big { display: flex; flex-direction: column; align-items: center; flex: none; height: 157px; }
.big.dim { color: #a3a3a3; padding-left: 10px; }
.big.dim .cap { padding-right: 8px; }
.pic { height: 81px; padding-top: 8px; }
.cap { height: 30px; line-height: 30px; }
.sub { height: 40px; display: flex; align-items: center; gap: 8px; padding-bottom: 1px; }
.pressed { background: #c9c9c9; margin-top: -1px; padding-top: 1px; height: 160px; }
.stack .line { height: 49.500px; display: flex; align-items: center; }
.stack.tight .line { height: 46.500px; }
.select { height: 46px; background: #fff; border: 2px solid #cfcfcf; display: flex; align-items: center; justify-content: space-between; padding: 0 6px 0 3px; color: #444; }
.select.nb { border-left: 0; font-size: 29px; }
.fb { font-size: 33px; color: #555; line-height: 26px; padding-bottom: 4px; } .fi { font: italic bold 35px/1 "Liberation Serif", serif; color: #555; padding-left: 2px; padding-bottom: 3px; }
.fu { font-size: 31px; color: #555; padding-bottom: 4px; text-decoration: underline; text-underline-offset: 4px; text-decoration-thickness: 2px; font-weight: 600; }
.al { height: 46px; display: flex; justify-content: center; }
.hot { background: #c9c9c9; }
.wraps { padding-left: 15px; }
.pct { font-size: 37px; }
.fold { position: absolute; right: 18px; top: 175px; }

.formula { height: 104px; background: #e9e9e9; display: flex; padding: 23px 0 0 11px; align-items: flex-start; }
.box { height: 56px; background: #fdfdfd; border: 2px solid #d2d2d2; display: flex; align-items: center; color: #666; font-size: 31.800px; padding-bottom: 1px; }
.namebox { width: 227px; justify-content: space-between; padding: 0 12px 1px 8px; }
.formula .dots { margin: 16px 32px 0 31px; }
.tools { width: 246px; padding-left: 27px; margin-right: 5px; }
.tools em { font: italic 40px/1 "Liberation Serif", serif; -webkit-text-stroke: .6px #666; } .tools small { font-size: 31px; }
.input { width: 2311px; justify-content: space-between; padding: 0 8px 1px 22px; }

.sheet { height: 1088px; background: #e9e9e9; display: flex; }
.cells { width: 2836px; overflow: hidden; border-right: 2px solid #a8a8a8; }
.r { display: grid; grid-template-columns: 137px 456px 509px 316px 317px 316px 317px 316px 150px; height: 82.4px; background: #fff; }
.r > * { border: solid #dcdcdc; border-width: 0 2px 2px 0; text-decoration: none; font-weight: normal; min-width: 0; display: flex; align-items: center; justify-content: center; }
.r.heads { height: 80px; background: #e9e9e9; font: 66px/1 "Liberation Sans", sans-serif; color: #000; border-bottom: 2px solid #a5a5a5; }
.heads > span { border: 0; border-right: 2px solid #c4c4c4; padding-top: 1px; }
.heads .corner { border: 0; justify-content: flex-end; padding-right: 5px; }
.heads .sel { background: #d6d6d6; color: #2b6b48; border-bottom: 4px solid #3d7d58; height: 80px; padding-top: 4px; }
.heads .last { padding-left: 132px; border: 0; justify-content: flex-start; }
.r b { background: #e9e9e9; font: 67px/1 "Liberation Sans", sans-serif; color: #000; border-color: #cdcdcd; padding-top: 5px; }
.r.on b { background: #d6d6d6; color: #2b6b48; border-bottom-color: #c2c2c2; padding-top: 7px; }
.r u { font: 60px/1 "Liberation Serif", "Noto Sans CJK SC", serif; color: #05070c; border: 0; border-bottom: 2px solid #1d2126; background: #fff; padding-top: 12px; }
.r.first { height: 82px; } .r.second { height: 86px; } .r.stub { height: 17px; }
.r u i { width: 30px; text-align: center; transform: scale(1.45, 1.2); }
.r.first u { padding-top: 11px; }
.first u, .r.stub u { background: #49525d; color: #fff; }
.r.stub > * { padding: 0; }
.stub u { border: 0; border-right: 2px solid #222; }
.first u:nth-child(2) { border-bottom: 3px solid #347e51; }
.second u, .even u { background: #d7dbe0; }
.odd u:nth-child(2) { background: #cbcbcb; }
.even u:nth-child(2) { background: #abaeb1; }
.r .over { overflow: visible; justify-content: flex-start; font: 300 60px/1 "Liberation Serif", "Noto Sans CJK SC", serif; color: #05070c; padding-left: 11px; padding-top: 12px; }
.over .tail { margin-left: 744px; }
.r .two { padding-left: 56px; }
.vscroll { width: 37px; margin-left: 3px; display: flex; flex-direction: column; }
.btn { background: #fff; border: 2px solid #cfcfcf; width: 37px; height: 37px; display: flex; align-items: center; justify-content: center; flex: none; }
.low { margin-bottom: -2px; }
.thumb { background: #fff; border: 2px solid #bdbdbd; height: 609px; flex: none; }
.track { background: #dedede; flex: 1; }

.sheettabs { height: 51px; background: #e9e9e9; border-top: 2px solid #a8a8a8; border-bottom: 2px solid #cfcfcf; display: flex; font-size: 30px; }
.nav { margin: 16px 69px 0 44px; }
.st { height: 34px; margin-top: 5px; border-left: 2px solid #b8b8b8; padding: 0 0 0 15px; line-height: 25px; }
.st.act { width: 275px; height: 45px; margin: -2px 0 0; background: #fff; color: #3b7f58; border: 0; border-bottom: 4px solid #3d7358; border-right: 2px solid #bbb; padding: 6px 0 0 18px; }
.st.w216 { padding-left: 16px; }
.plus { margin: 8px 811px 0 58px; }
.sheettabs .dots { margin: 12px 25px 0 0; }
.hscroll { width: 1085px; height: 37px; display: flex; margin-top: 5px; }
.hthumb { width: 883px; background: #fff; border: 2px solid #bdbdbd; }
.status { height: 46px; background: #f2f2f2; display: flex; align-items: center; padding-left: 9px; font-size: 28px; color: #606060; }
.status > span { padding-bottom: 3px; }
.s1 { width: 258px; margin-left: 1515px; } .s2 { width: 125px; } .s3 { width: 257px; }
.view { width: 68px; height: 46px; display: flex; align-items: center; justify-content: center; }
.view.lit { background: #cdcdcd; }
.zoom { margin: 0 22px 0 7px; }
.edge { height: 3px; background: #383838; padding-left: 108px; }
.edge i { display: block; width: 774px; height: 3px; background: #f4f4f4; }

.wm { position: absolute; left: 1430px; top: 346px; font: 28px/1 "Liberation Sans", sans-serif; letter-spacing: .5px; color: rgba(222, 222, 222, .5); }

.menu { position: absolute; background: #fff; border: 2px solid #c8c8c8; box-shadow: 3px 4px 4px rgba(0, 0, 0, .18); color: #606060; }
.menu.main { left: 1477px; top: 373px; width: 436px; height: 641px; }
.menu.side { left: 1912px; top: 376px; width: 325px; height: 714px; }
.mi { height: 93.300px; display: flex; align-items: center; font-weight: bold; padding-left: 13px; }
.mi text { font-weight: normal; }
.mi > svg { width: 72px; margin: 5px 11px 0 0; }
.mi u { text-underline-offset: 4px; text-decoration-thickness: 2px; }
.mi span { flex: 1; padding-bottom: 1px; }
.main .mi u, .side .mi u { letter-spacing: .4px; }
.go { border: solid transparent; border-width: 8px 0 8px 6px; border-left-color: #777; margin-right: 21px; }
.mi.hl { background: #acd9c1; color: #27352d; }
.mi.hl2 { background: #acd9c1; }
.rosy { color: #96333f; }
.menu hr { border: 0; border-top: 2px solid #dedede; margin: 0 2px; }
.menu hr.in { margin: 0 0 1px 93px; }
.mi.sm { height: 54.300px; font-weight: normal; padding-left: 10px; }
.mi.sm > svg { width: 32px; margin: 0 21px 0 0; }
.side .mi > svg { margin-right: 10px; margin-left: 1px; }
.mi.other { height: 56px; font-weight: normal; padding-left: 62px; }

.halo { position: absolute; left: 1994px; top: 526px; width: 202px; height: 202px; border-radius: 50%; background: rgba(234, 92, 108, .3); }
.cursor { position: absolute; left: 2081px; top: 614px; }
.mark { position: absolute; border: 6px solid #ff3a4a; border-radius: 9px; }
.m-col { left: 132px; top: 517px; width: 462px; height: 1086px; }
.m-rule { left: 1479px; top: 372px; width: 438px; height: 98px; }
.m-between { left: 1912px; top: 564px; width: 327px; height: 98px; }
.arrows { position: absolute; left: 685px; top: 380px; }

.logo { position: absolute; left: 2443px; top: 1486px; width: 376px; color: #379bdf; font-family: "Noto Sans CJK SC", sans-serif; font-weight: bold; }
.l1 { display: flex; justify-content: space-between; height: 84px; }
.wm1 { font-size: 98px; line-height: 84px; letter-spacing: -1px; margin-left: -3px; transform: translateY(-3px) scaleY(.9); -webkit-text-stroke: 2.500px #379bdf; }
.wm2 { width: 172px; background: #379bdf; color: #fff; border-radius: 10px 0 10px 0; font-size: 73px; line-height: 80px; text-align: center; -webkit-text-stroke: 1px #fff; }
.l2 { height: 58px; margin-top: 22px; border: 2px solid #379bdf; border-radius: 6px 8px 0 6px; display: flex; justify-content: space-between; font: bold 46px/46px Lato, sans-serif; }
.l2 span { padding-left: 12px; letter-spacing: 1px; -webkit-text-stroke: 1px #379bdf; }
.l2 b { width: 79px; background: #379bdf; display: flex; align-items: center; justify-content: center; }
.play { position: absolute; left: 1380px; top: 840px; width: 120px; height: 120px; border-radius: 50%; background: rgba(72, 79, 88, .7); display: flex; align-items: center; padding-left: 44px; }
```
